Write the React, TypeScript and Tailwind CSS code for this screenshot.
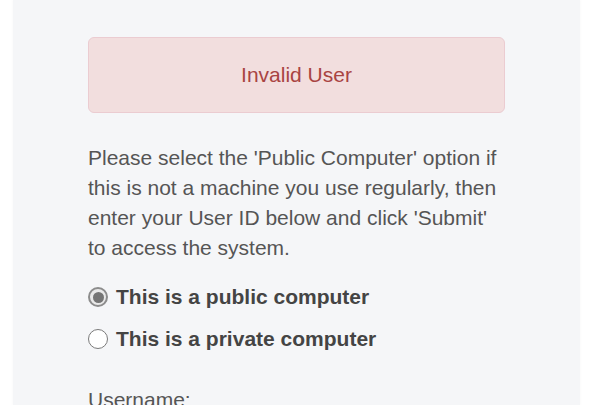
import { useState } from 'react';

const font = { fontFamily: '"Liberation Sans", Arial, sans-serif' };

function Radio({ checked, label, onSelect }: { checked: boolean; label: string; onSelect: () => void }) {
  return (
    <label className="flex items-center h-[30px] cursor-pointer" onClick={onSelect}>
      {checked ? (
        <span className="w-[20px] h-[20px] rounded-full border-[2px] border-[#8c8c8c] bg-[#e9e9e9] flex items-center justify-center">
          <span className="w-[11px] h-[11px] rounded-full bg-[#757575]" />
        </span>
      ) : (
        <span className="w-[20px] h-[20px] rounded-full border-[1.5px] border-[#7a7a7a] bg-white" />
      )}
      <span className="ml-[8px] font-bold text-[21px] text-[#444]">{label}</span>
    </label>
  );
}

export default function App() {
  const [isPublic, setIsPublic] = useState(true);

  return (
    <div className="h-[405px] bg-white overflow-hidden" style={font}>
      <div className="ml-[13px] w-[567px] h-full bg-[#f5f6f8] shadow-[0_0_3px_rgba(0,0,0,0.04)] pt-[37px] px-[75px]">
        <div className="h-[76px] rounded-[6px] border border-[#ebccd1] bg-[#f2dede] text-[#a94442] text-[21px] flex items-center justify-center">
          Invalid User
        </div>

        <p className="mt-[30px] text-[21px] leading-[30px] text-[#555]">
          Please select the 'Public Computer' option if this is not a machine you use regularly, then enter your User ID below and click 'Submit' to access the system.
        </p>

        <div className="mt-[19px] flex flex-col gap-[12px]">
          <Radio checked={isPublic} label="This is a public computer" onSelect={() => setIsPublic(true)} />
          <Radio checked={!isPublic} label="This is a private computer" onSelect={() => setIsPublic(false)} />
        </div>

        <div className="mt-[31px] text-[21px] leading-[30px] text-[#555]">Username:</div>
      </div>
    </div>
  );
}
